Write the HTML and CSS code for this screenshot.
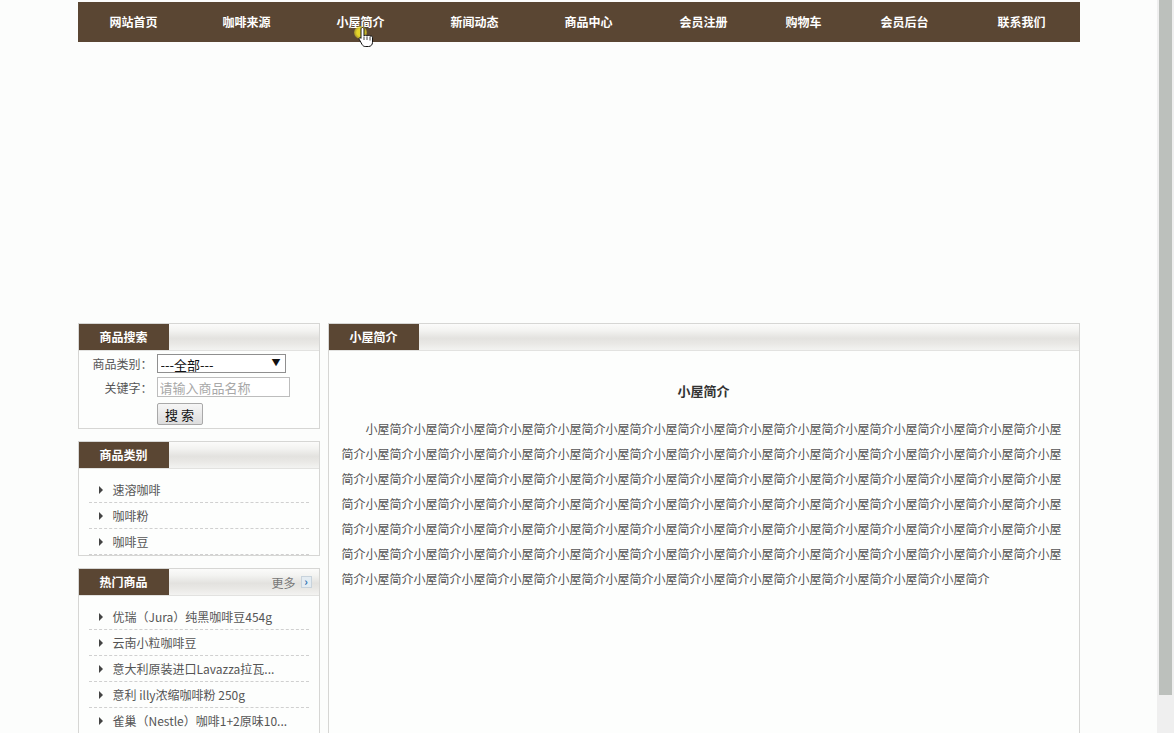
FILE: index.html
```html
<!DOCTYPE html>
<html lang="zh-CN">
<head>
<meta charset="utf-8">
<title>小屋简介</title>
<link rel="stylesheet" href="styles.css">
</head>
<body>
<div class="viewport">
  <div class="page">
    <nav class="nav">
      <a class="nav-item w112" href="#">网站首页</a>
      <a class="nav-item w114" href="#">咖啡来源</a>
      <a class="nav-item w114 current" href="#">小屋简介<span class="cursor-dot"></span><svg class="hand" width="16" height="22" viewBox="0 0 16 22"><path d="M4.5 1.5c.8 0 1.5.6 1.5 1.5v7c.3-.9 2.6-.9 3 0 .4-.8 2.5-.8 3 .3.6-.6 2.5-.4 2.5 1v5c0 2.5-1.6 4.2-4 4.2H7.2c-1.4 0-2.3-.7-3-1.8L1.2 13.3c-.6-1 .5-2.3 1.6-1.4L3 12.3V3c0-.9.7-1.5 1.5-1.5z" fill="#fff" stroke="#111" stroke-width="1"/><path d="M9 10.5v3.5M12 11v3.5M6 10.5v3.5" stroke="#111" stroke-width="0.8" fill="none"/></svg></a>
      <a class="nav-item w114" href="#">新闻动态</a>
      <a class="nav-item w114" href="#">商品中心</a>
      <a class="nav-item w116" href="#">会员注册</a>
      <a class="nav-item w84" href="#">购物车</a>
      <a class="nav-item w118" href="#">会员后台</a>
      <a class="nav-item w116" href="#">联系我们</a>
    </nav>
    <div class="banner"></div>
    <div class="content">
      <aside class="sidebar">
        <section class="box">
          <div class="box-head"><span class="tab">商品搜索</span></div>
          <form class="search">
            <label class="lbl">商品类别：</label>
            <div class="select-wrap">
              <select class="select"><option>---全部---</option></select>
            </div>
            <label class="lbl">关键字：</label>
            <input class="input" type="text" placeholder="请输入商品名称">
            <span></span>
            <button class="btn" type="button">搜 索</button>
          </form>
        </section>
        <section class="box">
          <div class="box-head"><span class="tab">商品类别</span></div>
          <ul class="list">
            <li>速溶咖啡</li>
            <li>咖啡粉</li>
            <li>咖啡豆</li>
          </ul>
        </section>
        <section class="box">
          <div class="box-head"><span class="tab">热门商品</span><a class="more" href="#">更多<span class="more-icon">›</span></a></div>
          <ul class="list">
            <li>优瑞（Jura）纯黑咖啡豆454g</li>
            <li>云南小粒咖啡豆</li>
            <li>意大利原装进口Lavazza拉瓦...</li>
            <li>意利 illy浓缩咖啡粉 250g</li>
            <li>雀巢（Nestle）咖啡1+2原味10...</li>
          </ul>
        </section>
      </aside>
      <main class="main box">
        <div class="box-head"><span class="tab">小屋简介</span></div>
        <h2 class="title">小屋简介</h2>
        <p class="text" id="intro"></p>
      </main>
    </div>
  </div>
</div>
<div class="scrollbar"><div class="thumb"></div></div>
<script src="app.js"></script>
</body>
</html>
```
FILE: app.js
```js
document.getElementById('intro').textContent = '小屋简介'.repeat(103);
```
FILE: styles.css
```css
html, body {
  margin: 0;
  padding: 0;
}
body {
  display: flex;
  height: 733px;
  overflow: hidden;
  background: #fcfdfc;
  font-family: "Noto Sans CJK SC", "Noto Sans", sans-serif;
  font-size: 12px;
  color: #555;
}
.viewport {
  flex: 0 0 1157px;
  height: 733px;
  overflow: hidden;
}
.page {
  width: 1002px;
  margin: 2px auto 0;
}
.nav {
  display: flex;
  height: 40px;
  background: #5a4633;
}
.nav-item {
  position: relative;
  display: block;
  text-align: center;
  line-height: 40px;
  color: #fff;
  font-weight: 700;
  font-size: 12px;
  text-decoration: none;
}
.w84 { width: 84px; }
.w112 { width: 112px; }
.w114 { width: 114px; }
.w116 { width: 116px; }
.w118 { width: 118px; }
.cursor-dot {
  position: absolute;
  left: 50px;
  top: 24px;
  width: 13px;
  height: 13px;
  border-radius: 50%;
  background: radial-gradient(circle, rgba(235,220,40,0.95) 40%, rgba(235,220,40,0.5) 70%, rgba(235,220,40,0) 100%);
}
.hand {
  position: absolute;
  left: 54px;
  top: 24px;
}
.banner {
  height: 281px;
}
.content {
  display: flex;
  gap: 8px;
  align-items: flex-start;
}
.sidebar {
  flex: 0 0 242px;
  display: flex;
  flex-direction: column;
  gap: 12px;
}
.box {
  border: 1px solid #d6d6d4;
  background: #fdfefd;
}
.box-head {
  display: flex;
  align-items: center;
  height: 26px;
  background: linear-gradient(#fbfbfa 0%, #f3f3f1 25%, #e3e2df 55%, #e9e8e5 75%, #f3f3f1 100%);
  border-bottom: 1px solid #e2e2e0;
}
.tab {
  display: block;
  width: 90px;
  height: 26px;
  line-height: 26px;
  text-align: center;
  background: #5a4633;
  color: #fff;
  font-weight: 700;
  font-size: 12px;
}
.more {
  margin-left: auto;
  margin-right: 7px;
  display: flex;
  align-items: center;
  gap: 5px;
  color: #777;
  text-decoration: none;
  font-size: 12px;
}
.more-icon {
  display: block;
  width: 9px;
  height: 10px;
  line-height: 9px;
  text-align: center;
  background: #e4ecf2;
  border: 1px solid #c8d3dc;
  color: #2a6fb0;
  font-size: 11px;
  font-weight: 700;
}
.search {
  display: grid;
  grid-template-columns: 74px auto;
  column-gap: 4px;
  row-gap: 4px;
  align-items: center;
  padding: 3px 0 3px;
}
.lbl {
  text-align: right;
  color: #555;
  font-size: 12px;
}
.select-wrap {
  position: relative;
  width: 129px;
  height: 19px;
}
.select-wrap::after {
  content: "▼";
  position: absolute;
  right: 5px;
  top: 2px;
  font-size: 9px;
  color: #111;
  pointer-events: none;
}
.select {
  appearance: none;
  -webkit-appearance: none;
  display: block;
  width: 129px;
  height: 19px;
  margin: 0;
  padding: 0 3px;
  border: 1px solid #8f8f8f;
  border-radius: 0;
  background: #fff;
  font-family: inherit;
  font-size: 13px;
  color: #111;
}
.input {
  width: 133px;
  height: 20px;
  box-sizing: border-box;
  margin: 0;
  padding: 0 2px;
  border: 1px solid #bdbdbd;
  font-family: inherit;
  font-size: 13px;
  background: #fff;
}
.input::placeholder {
  color: #a8a8a8;
}
.btn {
  width: 46px;
  height: 22px;
  margin-top: 2px;
  padding: 0;
  border: 1px solid #a9a9a9;
  border-radius: 2px;
  background: linear-gradient(#f6f6f6, #dddddd);
  font-family: inherit;
  font-size: 13px;
  color: #111;
}
.list {
  list-style: none;
  margin: 0;
  padding: 8px 10px 0;
}
.list li {
  position: relative;
  height: 25px;
  line-height: 25px;
  padding-left: 24px;
  border-bottom: 1px dashed #d0d0d0;
  color: #555;
  font-size: 12px;
  white-space: nowrap;
  overflow: hidden;
}
.list li::before {
  content: "";
  position: absolute;
  left: 10px;
  top: 9px;
  border-left: 4px solid #444;
  border-top: 4px solid transparent;
  border-bottom: 4px solid transparent;
}
.main {
  flex: 1 1 auto;
  min-height: 500px;
}
.title {
  margin: 27px 0 13px;
  text-align: center;
  font-size: 13px;
  font-weight: 700;
  color: #333;
  line-height: 25px;
}
.text {
  margin: 0;
  padding: 0 17px 0 13px;
  text-indent: 2em;
  line-height: 25px;
  font-size: 12px;
  color: #555;
  word-break: break-all;
}
.scrollbar {
  flex: 0 0 17px;
  height: 733px;
  background: #efefef;
  box-sizing: border-box;
  padding: 0 2px;
}
.thumb {
  height: 695px;
  background: #bcc0bc;
}
```
